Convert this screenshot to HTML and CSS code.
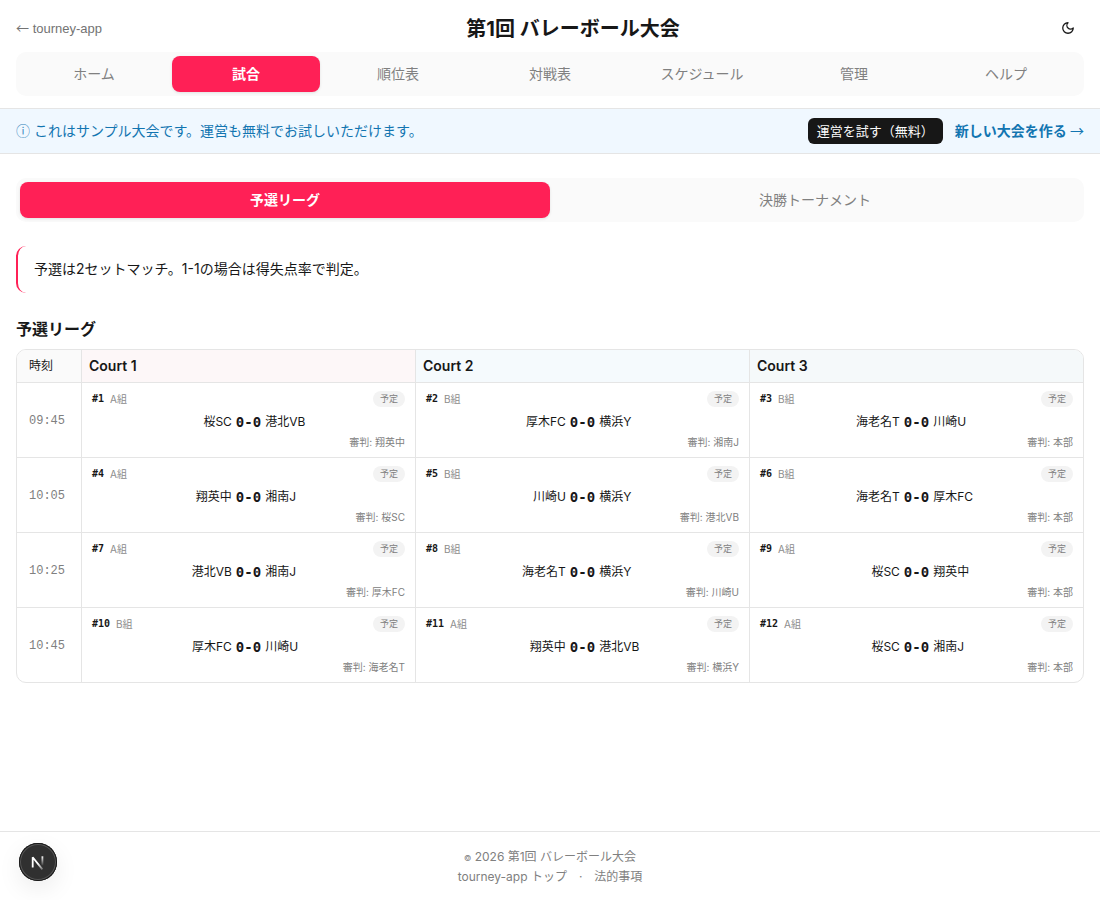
FILE: index.html
```html
<!DOCTYPE html>
<html lang="ja">
<head>
<meta charset="utf-8">
<meta name="viewport" content="width=device-width, initial-scale=1">
<title>第1回 バレーボール大会</title>
<link rel="stylesheet" href="styles.css">
</head>
<body>
<header class="header">
  <div class="header-row">
    <a class="back" href="#"><span class="arrow">←</span> tourney-app</a>
    <h1 class="title">第1回 バレーボール大会</h1>
    <div class="actions">
      <button class="theme" type="button" aria-label="テーマ切替">
        <svg width="14" height="14" viewBox="0 0 24 24" fill="none" stroke="currentColor" stroke-width="2.2" stroke-linecap="round" stroke-linejoin="round"><path d="M12 3a6 6 0 0 0 9 9 9 9 0 1 1-9-9Z"/></svg>
      </button>
    </div>
  </div>
  <nav class="tabs tabs-nav">
    <a class="tab" href="#">ホーム</a>
    <a class="tab tab-active" href="#">試合</a>
    <a class="tab" href="#">順位表</a>
    <a class="tab" href="#">対戦表</a>
    <a class="tab" href="#">スケジュール</a>
    <a class="tab" href="#">管理</a>
    <a class="tab" href="#">ヘルプ</a>
  </nav>
</header>
<section class="banner">
  <p class="banner-text"><span class="info">ⓘ</span> これはサンプル大会です。運営も無料でお試しいただけます。</p>
  <button class="try" type="button">運営を試す（無料）</button>
  <a class="create" href="#">新しい大会を作る <span class="arrow">→</span></a>
</section>
<main class="main">
  <div class="tabs tabs-stage">
    <button class="tab tab-active" type="button">予選リーグ</button>
    <button class="tab" type="button">決勝トーナメント</button>
  </div>
  <p class="note">予選は2セットマッチ。1-1の場合は得失点率で判定。</p>
  <h2 class="heading">予選リーグ</h2>
  <div class="table-wrap">
    <table class="schedule">
      <thead>
        <tr><th class="time-head">時刻</th><th class="court court-1">Court 1</th><th class="court court-2">Court 2</th><th class="court court-3">Court 3</th></tr>
      </thead>
      <tbody>
        <tr>
          <td class="time">09:45</td>
          <td class="match"><div class="top"><b class="no">#1</b><span class="group">A組</span><span class="badge">予定</span></div><div class="teams"><span class="home">桜SC</span><b class="score">0-0</b><span>港北VB</span></div><div class="referee">審判: 翔英中</div></td>
          <td class="match"><div class="top"><b class="no">#2</b><span class="group">B組</span><span class="badge">予定</span></div><div class="teams"><span class="home">厚木FC</span><b class="score">0-0</b><span>横浜Y</span></div><div class="referee">審判: 湘南J</div></td>
          <td class="match"><div class="top"><b class="no">#3</b><span class="group">B組</span><span class="badge">予定</span></div><div class="teams"><span class="home">海老名T</span><b class="score">0-0</b><span>川崎U</span></div><div class="referee">審判: 本部</div></td>
        </tr>
        <tr>
          <td class="time">10:05</td>
          <td class="match"><div class="top"><b class="no">#4</b><span class="group">A組</span><span class="badge">予定</span></div><div class="teams"><span class="home">翔英中</span><b class="score">0-0</b><span>湘南J</span></div><div class="referee">審判: 桜SC</div></td>
          <td class="match"><div class="top"><b class="no">#5</b><span class="group">B組</span><span class="badge">予定</span></div><div class="teams"><span class="home">川崎U</span><b class="score">0-0</b><span>横浜Y</span></div><div class="referee">審判: 港北VB</div></td>
          <td class="match"><div class="top"><b class="no">#6</b><span class="group">B組</span><span class="badge">予定</span></div><div class="teams"><span class="home">海老名T</span><b class="score">0-0</b><span>厚木FC</span></div><div class="referee">審判: 本部</div></td>
        </tr>
        <tr>
          <td class="time">10:25</td>
          <td class="match"><div class="top"><b class="no">#7</b><span class="group">A組</span><span class="badge">予定</span></div><div class="teams"><span class="home">港北VB</span><b class="score">0-0</b><span>湘南J</span></div><div class="referee">審判: 厚木FC</div></td>
          <td class="match"><div class="top"><b class="no">#8</b><span class="group">B組</span><span class="badge">予定</span></div><div class="teams"><span class="home">海老名T</span><b class="score">0-0</b><span>横浜Y</span></div><div class="referee">審判: 川崎U</div></td>
          <td class="match"><div class="top"><b class="no">#9</b><span class="group">A組</span><span class="badge">予定</span></div><div class="teams"><span class="home">桜SC</span><b class="score">0-0</b><span>翔英中</span></div><div class="referee">審判: 本部</div></td>
        </tr>
        <tr>
          <td class="time">10:45</td>
          <td class="match"><div class="top"><b class="no">#10</b><span class="group">B組</span><span class="badge">予定</span></div><div class="teams"><span class="home">厚木FC</span><b class="score">0-0</b><span>川崎U</span></div><div class="referee">審判: 海老名T</div></td>
          <td class="match"><div class="top"><b class="no">#11</b><span class="group">A組</span><span class="badge">予定</span></div><div class="teams"><span class="home">翔英中</span><b class="score">0-0</b><span>港北VB</span></div><div class="referee">審判: 横浜Y</div></td>
          <td class="match"><div class="top"><b class="no">#12</b><span class="group">A組</span><span class="badge">予定</span></div><div class="teams"><span class="home">桜SC</span><b class="score">0-0</b><span>湘南J</span></div><div class="referee">審判: 本部</div></td>
        </tr>
      </tbody>
    </table>
  </div>
</main>
<footer class="footer">
  <p class="copy"><span class="copy-mark">©</span> 2026 第1回 バレーボール大会</p>
  <p class="footer-links"><a href="#">tourney-app トップ</a><span>·</span><a href="#">法的事項</a></p>
</footer>
<button class="dev" type="button" aria-label="開発ツール">
  <svg width="38" height="38" viewBox="0 0 38 38" fill="none">
    <defs>
      <linearGradient id="diag" x1="20" y1="20" x2="24" y2="26" gradientUnits="userSpaceOnUse"><stop stop-color="#fff"/><stop offset="1" stop-color="#fff" stop-opacity="0.3"/></linearGradient>
      <linearGradient id="stem" x1="0" y1="13" x2="0" y2="23" gradientUnits="userSpaceOnUse"><stop stop-color="#fff"/><stop offset="1" stop-color="#fff" stop-opacity="0"/></linearGradient>
    </defs>
    <path d="M13.7 24.5V14.2L23.4 26.4" stroke="url(#diag)" stroke-width="1.8" stroke-linejoin="bevel"/>
    <path d="M23.4 13.3V22.5" stroke="url(#stem)" stroke-width="1.8"/>
  </svg>
</button>
</body>
</html>
```
FILE: styles.css
```css
* { box-sizing: border-box; }

body {
  margin: 0;
  min-height: 100vh;
  display: flex;
  flex-direction: column;
  background: #fff;
  color: #171717;
  font: 14px/20px Inter, "Noto Sans CJK JP", sans-serif;
}

h1, h2, p { margin: 0; }
a { color: inherit; text-decoration: none; }
button { border: 0; padding: 0; font: inherit; color: inherit; cursor: pointer; }
.arrow { font-family: "Noto Sans CJK JP", sans-serif; font-weight: 400; line-height: 1; }

.header { padding: 12px 16px; }
.header-row { display: flex; align-items: center; margin-bottom: 8px; }
.back { padding-top: 2px; font: 13px/20px "Liberation Sans", "Noto Sans CJK JP", sans-serif; color: #737373; }
.title { flex: 1; padding-top: 2px; font-size: 20px; line-height: 28px; font-weight: 700; text-align: center; }
.actions { padding-left: 8px; }
.theme { display: grid; place-items: center; width: 32px; height: 32px; background: none; }

.tabs { display: grid; padding: 4px; border-radius: 10px; background: #fafafa; }
.tabs-nav { grid-template-columns: repeat(7, 1fr); gap: 4px; }
.tabs-stage { grid-template-columns: repeat(2, 1fr); }
.tab {
  padding: 8px 0;
  border-radius: 8px;
  background: none;
  color: #808080;
  line-height: 20px;
  text-align: center;
}
.tab-active {
  background: #ff2056;
  color: #fff;
  font-weight: 700;
  box-shadow: 0 1px 3px rgba(0, 0, 0, 0.1);
}

.banner {
  display: flex;
  align-items: center;
  padding: 9px 16px;
  border-top: 1px solid #e5e5e5;
  border-bottom: 1px solid #e5e5e5;
  background: #f0f8ff;
  color: #1275b1;
}
.banner-text { flex: 1; }
.info { opacity: 0.8; }
.try {
  padding: 3px 9px;
  border-radius: 6px;
  background: #171717;
  color: #fafafa;
  font-size: 13px;
  line-height: 20px;
}
.create { margin-left: 12px; font-weight: 700; }

.main { flex: 1; padding: 24px 16px; }
.note {
  margin-top: 24px;
  padding: 13px 16px 14px;
  border-left: 2px solid #ff2056;
  border-radius: 10px;
}
.heading { margin: 24px 0 8px; font-size: 16px; line-height: 24px; font-weight: 700; }

.table-wrap { border: 1px solid #e5e5e5; border-radius: 10px; overflow: hidden; }
.schedule { width: 100%; border-spacing: 0; table-layout: fixed; }
.schedule th, .schedule td { padding: 0; text-align: left; }
.schedule th + th, .schedule td + td { border-left: 1px solid #e5e5e5; }
.schedule td { border-top: 1px solid #e5e5e5; }
.schedule .time-head { width: 64px; padding: 6px 12px; background: #fafafa; font-size: 12px; font-weight: 400; }
.schedule .court { padding: 6px 7px; font-size: 14px; font-weight: 600; }
.court-1 { background: #fdf7f8; }
.court-2 { background: #f5fafd; }
.court-3 { background: #f5f9fa; }
.schedule .time { padding: 2px 12px 0; color: #808080; font: 12px/20px "Liberation Mono", monospace; }
.schedule .match { padding: 8px 10px; }
.top { display: flex; align-items: center; gap: 6px; }
.no { font: 700 10px/16px "DejaVu Sans Mono", monospace; }
.group { color: #8c8c8c; font-size: 10px; line-height: 16px; }
.badge {
  margin-left: auto;
  padding: 0 7px;
  border-radius: 8px;
  background: #f3f3f3;
  color: #808080;
  font-size: 9px;
  line-height: 16px;
}
.teams {
  display: grid;
  grid-template-columns: 1fr auto 1fr;
  gap: 4px;
  margin: 5px 0 3px;
  font-size: 12px;
  line-height: 20px;
}
.home { text-align: right; }
.score { font: 700 14px/20px "DejaVu Sans Mono", monospace; }
.referee { color: #808080; font-size: 10px; line-height: 14px; text-align: right; }

.footer {
  padding: 15px 16px 13px;
  border-top: 1px solid #e5e5e5;
  color: #808080;
  font-size: 12px;
  line-height: 20px;
  text-align: center;
}
.copy-mark { font-size: 8px; line-height: 1; }
.footer-links { display: flex; justify-content: center; gap: 12px; }

.dev {
  position: fixed;
  left: 19px;
  bottom: 19px;
  display: grid;
  place-items: center;
  width: 38px;
  height: 38px;
  border-radius: 50%;
  background: #303030;
  box-shadow: inset 0 0 0 1px #171717, inset 0 0 0 2px #555, 0 8px 24px rgba(0, 0, 0, 0.08);
}
```
